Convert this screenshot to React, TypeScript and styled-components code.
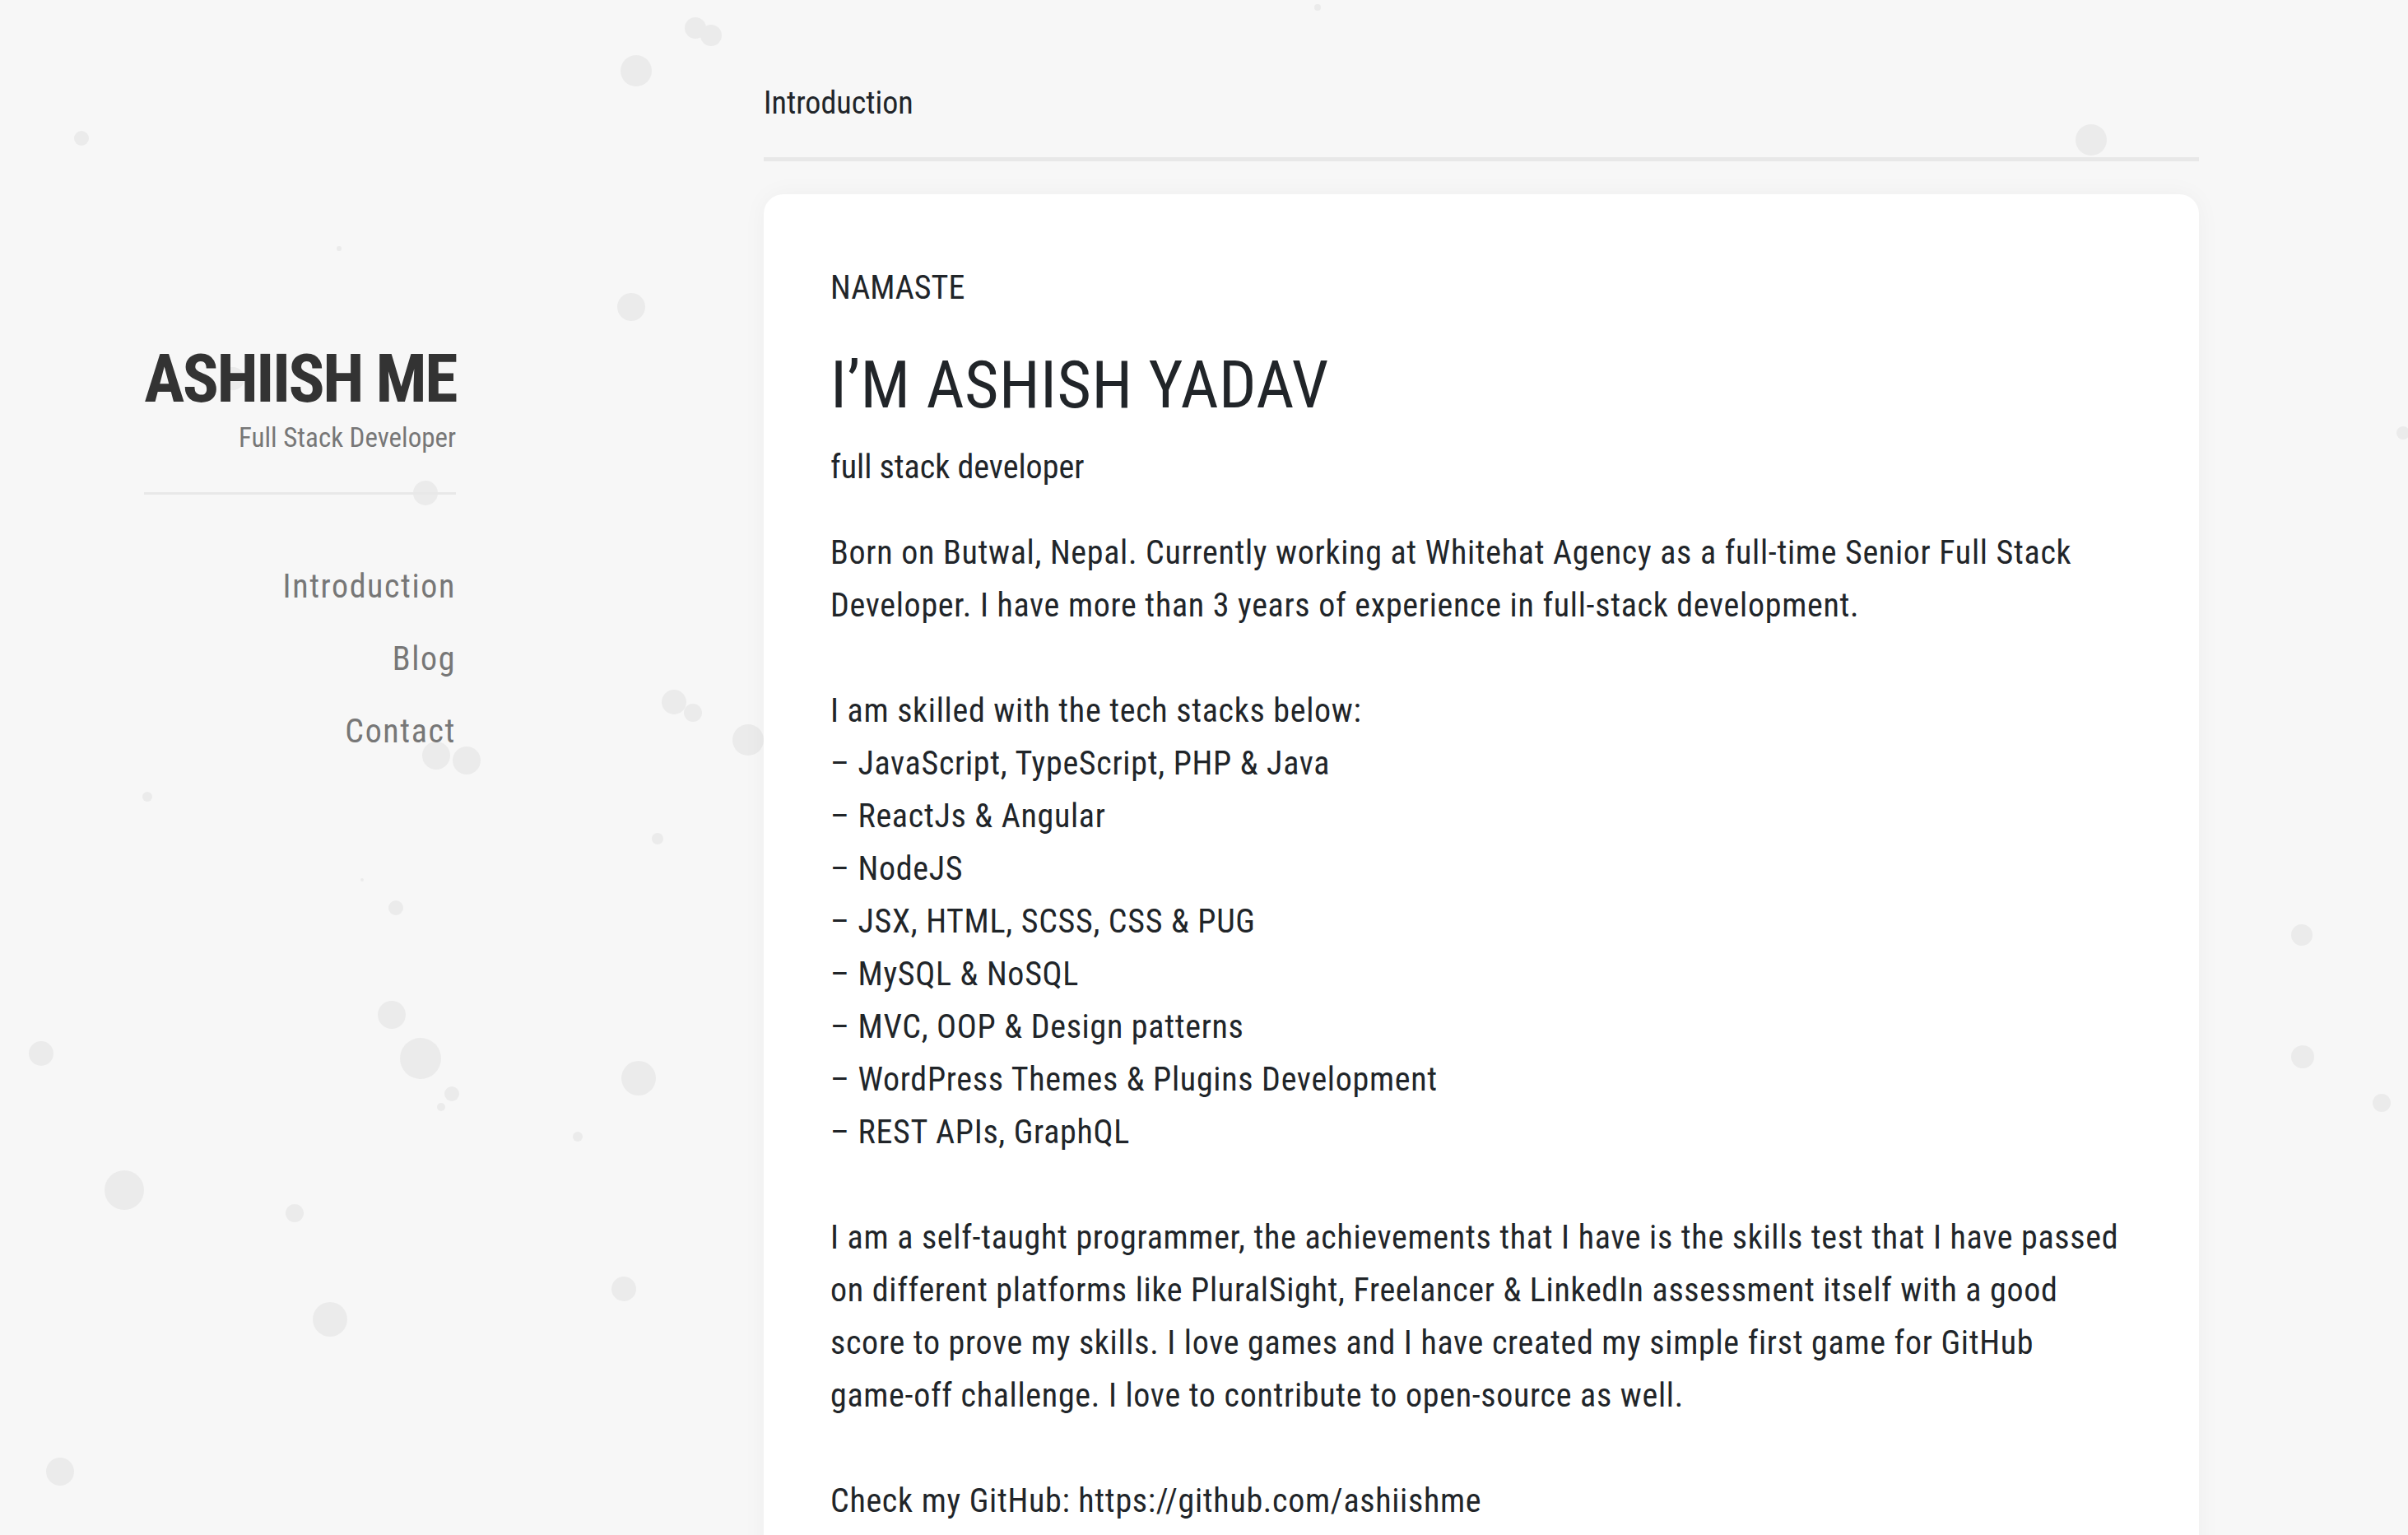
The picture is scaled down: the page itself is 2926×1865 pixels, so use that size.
import * as React from 'react'
import styled, { createGlobalStyle } from 'styled-components'

const GlobalStyle = createGlobalStyle`
  html, body {
    margin: 0;
    padding: 0;
    background: #f7f7f7;
  }
  body {
    font-family: Roboto, "DejaVu Sans Condensed", sans-serif;
    font-stretch: condensed;
    color: #212529;
  }
`

const Page = styled.div`
  position: relative;
  min-height: 100vh;
  overflow: hidden;
`

const Particles = styled.svg`
  position: absolute;
  left: 0;
  top: 0;
  width: 2926px;
  height: 1865px;
  z-index: 0;
`

const Layout = styled.div`
  position: relative;
  z-index: 1;
  display: grid;
  grid-template-columns: 554px 1744px;
  column-gap: 374px;
`

const Sidebar = styled.aside`
  padding-left: 175px;
  padding-top: 418px;
  text-align: right;
  white-space: nowrap;
`

const Brand = styled.div`
  padding-bottom: 46px;
  border-bottom: 3px solid #e8e8e8;
`

const Title = styled.h1`
  margin: 0;
  font-weight: 700;
  font-size: 82px;
  line-height: 84px;
  letter-spacing: -2.5px;
  color: #333;
`

const Subtitle = styled.div`
  margin-top: 10px;
  font-size: 33px;
  line-height: 1.2;
  color: #777;
`

const Nav = styled.nav`
  margin-top: 68px;
  display: flex;
  flex-direction: column;
  align-items: flex-end;
`

const NavLink = styled.a`
  font-size: 40px;
  line-height: 88px;
  letter-spacing: 1.6px;
  color: #777;
  text-decoration: none;
`

const Main = styled.main`
  padding-top: 102px;
`

const PageHeader = styled.div`
  padding-bottom: 43px;
  border-bottom: 5px solid #e8e8e8;
`

const PageTitle = styled.h2`
  margin: 0;
  font-weight: 400;
  font-size: 38px;
  line-height: 46px;
  color: #212529;
`

const Card = styled.section`
  margin-top: 40px;
  background: #fff;
  border-radius: 24px;
  box-shadow: 0 0 30px rgba(0, 0, 0, 0.04);
  padding: 82px 81px 120px;
  font-size: 40px;
  line-height: 64px;
  color: #212529;
`

const Eyebrow = styled.div`
  text-transform: uppercase;
`

const Heading = styled.h1`
  margin: 39px 0 0;
  font-weight: 400;
  font-size: 80px;
  line-height: 94px;
  letter-spacing: 0.5px;
  color: #212529;
`

const Tagline = styled.div`
  margin-top: 21px;
`

const Body = styled.p`
  margin: 40px 0 0;
  white-space: nowrap;
  letter-spacing: 0.7px;
`

const dots: [number, number, number][] = [
  [845, 34, 13], [864, 43, 13], [773, 86, 19], [99, 168, 9], [412, 302, 3],
  [767, 373, 17], [517, 599, 15], [283, 460, 14], [2541, 170, 19], [1601, 9, 4],
  [2920, 526, 8], [819, 853, 15], [842, 866, 11], [909, 899, 19], [530, 918, 17],
  [567, 924, 17], [179, 968, 6], [799, 1019, 7], [440, 1069, 2], [481, 1103, 9],
  [2797, 1136, 13], [476, 1233, 17], [511, 1286, 25], [776, 1310, 21], [50, 1280, 15],
  [549, 1329, 9], [536, 1345, 5], [702, 1381, 6], [2894, 1340, 11], [151, 1446, 24],
  [358, 1474, 11], [758, 1566, 15], [401, 1603, 21], [73, 1788, 17], [2798, 1284, 14],
]

const skills = [
  'JavaScript, TypeScript, PHP & Java',
  'ReactJs & Angular',
  'NodeJS',
  'JSX, HTML, SCSS, CSS & PUG',
  'MySQL & NoSQL',
  'MVC, OOP & Design patterns',
  'WordPress Themes & Plugins Development',
  'REST APIs, GraphQL',
]

const App: React.FC = () => {
  return (
    <Page>
      <GlobalStyle />
      <Particles viewBox="0 0 2926 1865">
        {dots.map(([x, y, r], i) => (
          <circle key={i} cx={x} cy={y} r={r} fill="#ebebeb" />
        ))}
      </Particles>
      <Layout>
        <Sidebar>
          <Brand>
            <Title>ASHIISH ME</Title>
            <Subtitle>Full Stack Developer</Subtitle>
          </Brand>
          <Nav>
            <NavLink href="#">Introduction</NavLink>
            <NavLink href="#">Blog</NavLink>
            <NavLink href="#">Contact</NavLink>
          </Nav>
        </Sidebar>
        <Main>
          <PageHeader>
            <PageTitle>Introduction</PageTitle>
          </PageHeader>
          <Card>
            <Eyebrow>Namaste</Eyebrow>
            <Heading>I’M ASHISH YADAV</Heading>
            <Tagline>full stack developer</Tagline>
            <Body>
              Born on Butwal, Nepal. Currently working at Whitehat Agency as a full-time Senior Full Stack
              <br />
              Developer. I have more than 3 years of experience in full-stack development.
              <br />
              <br />
              I am skilled with the tech stacks below:
              {skills.map((s) => (
                <React.Fragment key={s}>
                  <br />– {s}
                </React.Fragment>
              ))}
              <br />
              <br />
              I am a self-taught programmer, the achievements that I have is the skills test that I have passed
              <br />
              on different platforms like PluralSight, Freelancer &amp; LinkedIn assessment itself with a good
              <br />
              score to prove my skills. I love games and I have created my simple first game for GitHub
              <br />
              game-off challenge. I love to contribute to open-source as well.
              <br />
              <br />
              Check my GitHub: https://github.com/ashiishme
            </Body>
          </Card>
        </Main>
      </Layout>
    </Page>
  )
}

export default App
